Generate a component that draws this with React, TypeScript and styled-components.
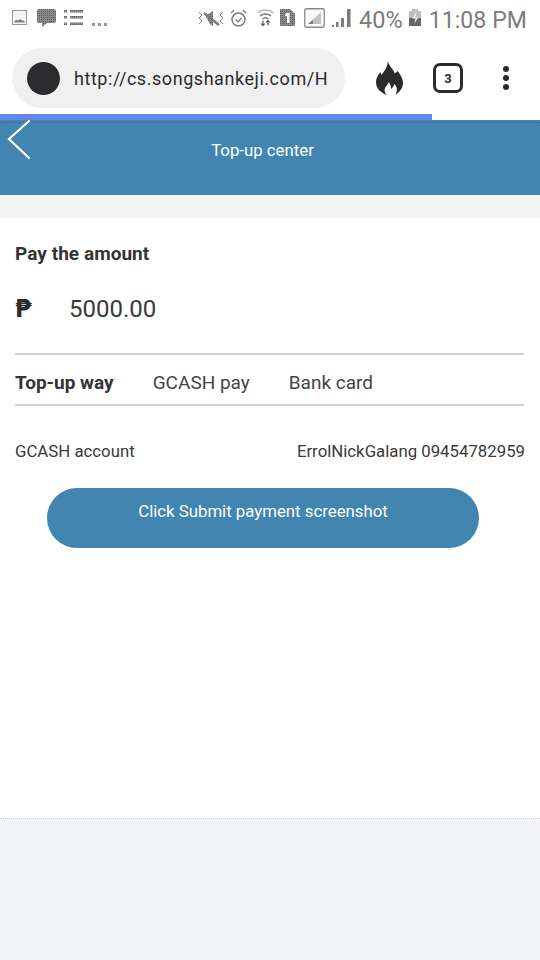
import React from "react";
import styled, { createGlobalStyle } from "styled-components";

const Global = createGlobalStyle`
  html, body { margin: 0; padding: 0; background: #f4f5f7; }
  body { font-family: Roboto, "Liberation Sans", sans-serif; color: #2b2b2b; }
  #root { width: 540px; height: 960px; overflow: hidden; }
`;

const Page = styled.div`
  width: 540px;
  height: 960px;
  display: flex;
  flex-direction: column;
  background: #f4f5f7;
`;

const StatusBar = styled.div`
  height: 40px;
  background: #fff;
  display: flex;
  align-items: flex-start;
  padding: 8px 13px 0 12px;
  box-sizing: border-box;
  color: #777;
`;

const StatusLeft = styled.div`
  display: flex;
  align-items: flex-start;
  flex: 1;
`;

const StatusIcon = styled.svg<{ $left: number; $top?: number }>`
  display: block;
  flex-shrink: 0;
  margin-left: ${(p) => p.$left}px;
  margin-top: ${(p) => p.$top ?? 0}px;
`;

const StatusRight = styled.div`
  display: flex;
  align-items: flex-start;
`;

const Percent = styled.span`
  font-size: 23.5px;
  line-height: 23px;
  color: #7b7b7b;
  margin-left: 8px;
  margin-top: 1px;
`;

const Clock = styled.span`
  font-size: 23px;
  line-height: 23px;
  color: #7b7b7b;
  margin-left: 8px;
  margin-top: 1px;
  letter-spacing: 0.1px;
`;

const BrowserBar = styled.div`
  height: 74px;
  background: #fff;
  display: flex;
  align-items: flex-start;
  padding: 8px 0 0 12px;
  box-sizing: border-box;
`;

const UrlPill = styled.div`
  width: 333px;
  height: 60px;
  border-radius: 30px;
  background: #f0f0f1;
  display: flex;
  align-items: center;
  padding: 0 18px 0 15px;
  box-sizing: border-box;
  flex-shrink: 0;
`;

const Favicon = styled.div`
  width: 33px;
  height: 33px;
  border-radius: 50%;
  background: #2c2c2e;
  flex-shrink: 0;
`;

const UrlText = styled.div`
  margin-left: 14px;
  font-size: 18px;
  letter-spacing: 0.55px;
  color: #2b2b2b;
  white-space: nowrap;
  overflow: hidden;
`;

const BrowserActions = styled.div`
  display: flex;
  align-items: center;
  height: 60px;
  margin-left: 31px;
`;

const TabCount = styled.div`
  width: 30px;
  height: 30px;
  box-sizing: border-box;
  border: 3px solid #2b2b2b;
  border-radius: 7px;
  font-size: 13px;
  font-weight: 700;
  display: flex;
  align-items: center;
  justify-content: center;
  margin-left: 30px;
  color: #2b2b2b;
`;

const Kebab = styled.div`
  display: flex;
  flex-direction: column;
  gap: 3px;
  margin-left: 40px;
  margin-top: -1px;
  & > i { display: block; width: 6px; height: 6px; border-radius: 50%; background: #2b2b2b; }
`;

const ProgressTrack = styled.div`
  height: 6px;
  background: #fff;
`;

const ProgressFill = styled.div`
  height: 6px;
  width: 432px;
  background: #6487ee;
`;

const Header = styled.div`
  position: relative;
  height: 75px;
  background: #4285b0;
  display: flex;
  justify-content: center;
  padding: 21px 15px 0 0;
  box-sizing: border-box;
  color: #fff;
  font-size: 16.8px;
  line-height: 19px;
  &::before {
    content: "";
    position: absolute;
    left: 0;
    right: 0;
    top: 2px;
    border-top: 1px dotted #356f96;
  }
`;

const BackIcon = styled.svg`
  position: absolute;
  left: 6px;
  top: 0;
`;

const Spacer = styled.div`
  height: 23px;
`;

const Card = styled.div`
  height: 601px;
  background: #fff;
  padding: 0 15px;
  box-sizing: border-box;
  border-bottom: 1px dotted #cfcfcf;
`;

const AmountTitle = styled.div`
  font-size: 19px;
  font-weight: 700;
  line-height: 22px;
  padding-top: 25px;
  color: #333;
  letter-spacing: 0.05px;
`;

const AmountRow = styled.div`
  display: flex;
  align-items: center;
  height: 34px;
  margin-top: 27px;
`;

const Peso = styled.span`
  width: 54px;
  font-size: 24px;
  font-weight: 700;
  font-family: "DejaVu Sans", sans-serif;
  color: #2b2b2b;
`;

const Amount = styled.span`
  font-size: 24px;
  color: #3a3a3a;
`;

const Tabs = styled.div`
  margin: 27px 1px 0 0;
  height: 53px;
  padding-top: 5px;
  border-top: 2px solid #cfcfcf;
  border-bottom: 2px solid #cfcfcf;
  box-sizing: border-box;
  display: flex;
  align-items: center;
  gap: 39px;
`;

const Tab = styled.span<{ $active?: boolean }>`
  font-size: 19px;
  font-weight: ${(p) => (p.$active ? 700 : 400)};
  color: ${(p) => (p.$active ? "#333" : "#444")};
`;

const AccountRow = styled.div`
  display: flex;
  justify-content: space-between;
  margin-top: 35px;
  font-size: 16.8px;
  line-height: 20px;
  color: #3a3a3a;
`;

const SubmitButton = styled.button`
  display: block;
  width: 432px;
  height: 60px;
  margin: 27px 0 0 32px;
  border: 0;
  border-radius: 30px;
  background: #4285b0;
  color: #fff;
  font: 400 16.8px/19px Roboto, sans-serif;
  padding: 0 0 13px;
`;

const Grey = "#7d7d7d";
const Dither = "url(#dither)";

export default function App() {
  return (
    <Page>
      <Global />
      <StatusBar>
        <StatusLeft>
          <StatusIcon $left={0} $top={2} width="15" height="15" viewBox="0 0 15 15">
            <rect x="0.5" y="0.5" width="14" height="14" fill="#f4f4f4" stroke="#999" />
            <path d="M2 12.500c1-3 3-3 4-2 1-1.500 3-1.500 4 0 1-.5 2 0 3 2z" fill={Grey} />
          </StatusIcon>
          <StatusIcon $left={10} $top={1} width="19" height="18" viewBox="0 0 19 18">
            <defs>
              <pattern id="dither" width="2" height="2" patternUnits="userSpaceOnUse">
                <rect width="2" height="2" fill="#8a8a8a" />
                <rect width="1" height="1" fill="#5f5f5f" />
              </pattern>
            </defs>
            <path d="M2 0h15a2 2 0 0 1 2 2v10a2 2 0 0 1-2 2H10l-5 4v-4H2a2 2 0 0 1-2-2V2a2 2 0 0 1 2-2z" fill={Dither} />
          </StatusIcon>
          <StatusIcon $left={8} $top={2} width="19" height="16" viewBox="0 0 19 16">
            <path d="M0 0h3v2.500H0zM0 6h3v2.500H0zM0 12.500h3V15H0zM6 0h13v2.500H6zM6 6h13v2.500H6zM6 12.500h13V15H6z" fill={Dither} />
          </StatusIcon>
          <StatusIcon $left={9} $top={14} width="15" height="4" viewBox="0 0 15 4">
            <path d="M0 1h3v3H0zM6 1h3v3H6zM12 1h3v3h-3z" fill="#9a9a9a" />
          </StatusIcon>
        </StatusLeft>
        <StatusRight>
          <StatusIcon $left={0} $top={2} width="26" height="17" viewBox="0 0 26 17">
            <path d="M1 2l3 3-3 3 3 3-3 3M25 2l-3 3 3 3-3 3 3 3" fill="none" stroke={Grey} />
            <path d="M6 3l3 2 6-4v15l-3-2z" fill={Dither} />
            <path d="M6 3l15 12" stroke={Grey} strokeWidth="2.500" />
          </StatusIcon>
          <StatusIcon $left={6} $top={1} width="17" height="18" viewBox="0 0 17 18">
            <circle cx="8.500" cy="10.500" r="6.500" fill="none" stroke={Grey} strokeWidth="1.500" />
            <path d="M5.500 10.500l2.500 2.500 3.500-4M1 4l3-3M16 4l-3-3" fill="none" stroke={Grey} strokeWidth="1.400" />
          </StatusIcon>
          <StatusIcon $left={10} $top={0} width="17" height="18" viewBox="0 0 17 18">
            <path d="M0.500 5a12 12 0 0 1 16 0" fill="none" stroke="#bbb" strokeWidth="1.500" />
            <path d="M3 8a8.500 8.500 0 0 1 11 0M5.500 11a4.500 4.500 0 0 1 6 0" fill="none" stroke={Grey} strokeWidth="1.500" />
            <path d="M6 12.500v5M4.200 15.700L6 17.500l1.800-1.800M11 17.500v-5M9.200 14.300L11 12.500l1.800 1.800" fill="none" stroke="#555" strokeWidth="1.200" />
          </StatusIcon>
          <StatusIcon $left={6} $top={1} width="15" height="17" viewBox="0 0 15 17">
            <path d="M0 1a1 1 0 0 1 1-1h9l5 5v11a1 1 0 0 1-1 1H1a1 1 0 0 1-1-1z" fill={Dither} />
            <path d="M6 4h3.500v10H7V7H5z" fill="#fff" />
          </StatusIcon>
          <StatusIcon $left={9} $top={0} width="21" height="20" viewBox="0 0 21 20">
            <rect x="0.750" y="0.750" width="19.500" height="18.500" rx="1.500" fill="#fafafa" stroke="#8a8a8a" strokeWidth="1.300" />
            <path d="M4 16L17 4v12z" fill="#c4c4c4" />
            <path d="M4 16h5v-4z" fill={Grey} />
          </StatusIcon>
          <StatusIcon $left={7} $top={1} width="19" height="18" viewBox="0 0 19 18">
            <path d="M0 16h2v2H0zM4 13h2.500v5H4zM9 9h3v9H9zM15 0h3.500v18H15z" fill={Grey} />
          </StatusIcon>
          <Percent>40%</Percent>
          <StatusIcon $left={6} $top={1} width="12" height="17" viewBox="0 0 12 17">
            <path d="M3 0h6v2h3v7H0V2h3z" fill="#bdbdbd" />
            <path d="M0 9h12v8H0z" fill="#666" />
            <path d="M7.500 3L3.500 9.500h3l-1 5 3.500-6H6z" fill="#fff" />
          </StatusIcon>
          <Clock>11:08 PM</Clock>
        </StatusRight>
      </StatusBar>
      <BrowserBar>
        <UrlPill>
          <Favicon />
          <UrlText>http://cs.songshankeji.com/H</UrlText>
        </UrlPill>
        <BrowserActions>
          <svg width="27" height="34" viewBox="0 0 25 34" preserveAspectRatio="none">
            <path
              d="M11 0C12 5 16 8 17.500 12.500L20 10C23 14 25 18 25 22C25 27 22 31 18 34C20 30 20 26 17 23C16 26 15 27 14 28C14 25 13 23 12 21C11 24 8 26 8 29C8 31 9 33 10 34C5 32 0 28 0 21C0 17 2 14 4 11L5 14C8 10 11 5 11 0z"
              fill="#2b2b2b"
            />
          </svg>
          <TabCount>3</TabCount>
          <Kebab>
            <i />
            <i />
            <i />
          </Kebab>
        </BrowserActions>
      </BrowserBar>
      <ProgressTrack>
        <ProgressFill />
      </ProgressTrack>
      <Header>
        <BackIcon width="28" height="40" viewBox="0 0 28 40">
          <path d="M23 1L3 19l20 19" fill="none" stroke="#fff" strokeWidth="2.200" strokeLinecap="round" />
        </BackIcon>
        Top-up center
      </Header>
      <Spacer />
      <Card>
        <AmountTitle>Pay the amount</AmountTitle>
        <AmountRow>
          <Peso>₱</Peso>
          <Amount>5000.00</Amount>
        </AmountRow>
        <Tabs>
          <Tab $active>Top-up way</Tab>
          <Tab>GCASH pay</Tab>
          <Tab>Bank card</Tab>
        </Tabs>
        <AccountRow>
          <span>GCASH account</span>
          <span>ErrolNickGalang 09454782959</span>
        </AccountRow>
        <SubmitButton>Click Submit payment screenshot</SubmitButton>
      </Card>
    </Page>
  );
}
